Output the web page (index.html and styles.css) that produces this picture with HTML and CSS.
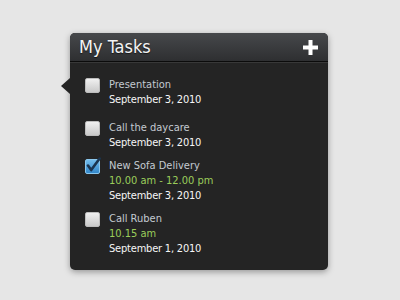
FILE: index.html
```html
<!DOCTYPE html>
<html>
<head>
<meta charset="utf-8">
<link rel="stylesheet" href="styles.css">
</head>
<body>
<div class="panel">
  <span class="pointer"></span>
  <div class="header">
    <h1 class="title">My Tasks</h1>
    <svg class="add" width="15" height="15" viewBox="0 0 15 15"><path d="M5.5 0h4v5.5h5.5v4h-5.5v5.5h-4v-5.5h-5.5v-4h5.5z" fill="#fff"/></svg>
  </div>
  <ul class="tasks">
    <li class="task">
      <span class="check"></span>
      <div class="info">
        <div class="name">Presentation</div>
        <div class="date">September 3, 2010</div>
      </div>
    </li>
    <li class="task">
      <span class="check"></span>
      <div class="info">
        <div class="name">Call the daycare</div>
        <div class="date">September 3, 2010</div>
      </div>
    </li>
    <li class="task">
      <span class="check checked">
        <svg width="17" height="17" viewBox="0 0 17 17"><path d="M3 8.5l3.2 4.6L14.6 1.5" fill="none" stroke="#1b3550" stroke-width="2.6" stroke-linecap="round" stroke-linejoin="round"/></svg>
      </span>
      <div class="info">
        <div class="name">New Sofa Delivery</div>
        <div class="time">10.00 am - 12.00 pm</div>
        <div class="date">September 3, 2010</div>
      </div>
    </li>
    <li class="task">
      <span class="check"></span>
      <div class="info">
        <div class="name">Call Ruben</div>
        <div class="time">10.15 am</div>
        <div class="date">September 1, 2010</div>
      </div>
    </li>
  </ul>
</div>
</body>
</html>
```
FILE: styles.css
```css
html, body {
  margin: 0;
  padding: 0;
}
body {
  background: #e6e6e6;
  font-family: "DejaVu Sans Condensed", "DejaVu Sans", sans-serif;
  height: 300px;
  overflow: hidden;
}
.panel {
  position: relative;
  margin: 33px 0 0 70px;
  width: 258px;
  height: 237px;
  background: #242424;
  border-radius: 5px;
  box-shadow: 0 2px 6px rgba(0, 0, 0, 0.35);
}
.pointer {
  position: absolute;
  left: -9px;
  top: 45px;
  width: 0;
  height: 0;
  border-top: 8px solid transparent;
  border-bottom: 8px solid transparent;
  border-right: 9px solid #242424;
}
.header {
  height: 28px;
  display: flex;
  align-items: center;
  justify-content: space-between;
  padding: 0 10px 0 9px;
  background: linear-gradient(#46484b, #2e2f31);
  border-radius: 5px 5px 0 0;
  border-bottom: 1px solid #0b0b0b;
  box-shadow: 0 1px 0 #383838;
}
.title {
  margin: 0;
  font-size: 18px;
  font-weight: normal;
  line-height: 28px;
  color: #f4f4f4;
  text-shadow: 0 1px 1px rgba(0, 0, 0, 0.6);
}
.add {
  display: block;
  margin-top: 1px;
}
.tasks {
  list-style: none;
  margin: 0;
  padding: 15px 15px 0 15px;
}
.task {
  display: flex;
  gap: 9px;
  margin-bottom: 8px;
}
.task:first-child {
  margin-bottom: 13px;
}
.check {
  position: relative;
  flex: none;
  width: 13px;
  height: 13px;
  margin-top: 1px;
  border: 1px solid #bdbdbd;
  border-radius: 2px;
  background: linear-gradient(#f0f0f0, #c9c9c9);
}
.check.checked {
  border-color: #8cc8ee;
  background: linear-gradient(#74bdec, #3388cb);
}
.check svg {
  position: absolute;
  left: -1px;
  top: -3px;
}
.info {
  font-size: 11px;
  line-height: 15px;
}
.name {
  color: #c3cad1;
}
.time {
  color: #9bcd5b;
}
.date {
  color: #f6f6f6;
  letter-spacing: -0.2px;
}
```
